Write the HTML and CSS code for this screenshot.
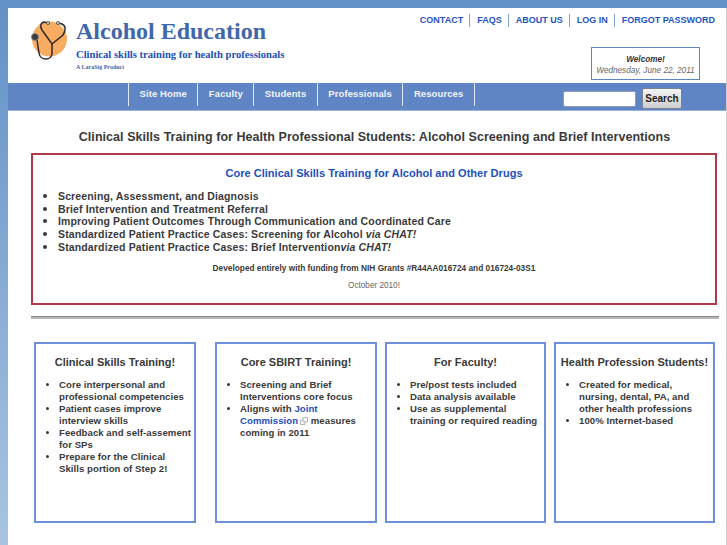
FILE: index.html
```html
<!DOCTYPE html>
<html>
<head>
  <title>Alcohol Education</title>
  <link rel="stylesheet" href="styles.css">
</head>
<body>
  <div class="page">
    <div class="header">
      <div class="brand">
        <svg class="logo" width="38" height="42" viewBox="0 0 38 42">
          <circle cx="18.500" cy="21" r="17.500" fill="#f8ac62"/>
          <path d="M17 5 L13 4 C9 5 9 9 11 12 L21 26 L32 17 C35 12 35 8 31 6 L27 5" fill="none" stroke="#2f2a28" stroke-width="1.500"/>
          <path d="M21 26 L21 35 C21 43 9 43 8 35 L6 22" fill="none" stroke="#2f2a28" stroke-width="1.500"/>
          <circle cx="4" cy="19" r="3.500" fill="#3a3a3a" stroke="#888"/>
          <circle cx="17" cy="5" r="1.500" fill="#ddd" stroke="#555"/>
          <circle cx="27" cy="5" r="1.500" fill="#ddd" stroke="#555"/>
        </svg>
        <div class="brand-text">
          <div class="site-name">Alcohol Education</div>
          <div class="tagline">Clinical skills training for health professionals</div>
          <div class="product">A LaraSig Product</div>
        </div>
      </div>
      <div class="header-right">
        <ul class="top-links">
          <li>CONTACT</li>
          <li>FAQS</li>
          <li>ABOUT US</li>
          <li>LOG IN</li>
          <li>FORGOT PASSWORD</li>
        </ul>
        <div class="welcome">
          <b>Welcome!</b>
          <span>Wednesday, June 22, 2011</span>
        </div>
      </div>
    </div>

    <div class="nav">
      <ul class="menu">
        <li>Site Home</li>
        <li>Faculty</li>
        <li>Students</li>
        <li>Professionals</li>
        <li>Resources</li>
      </ul>
      <div class="search">
        <input type="text">
        <button>Search</button>
      </div>
    </div>

    <h1>Clinical Skills Training for Health Professional Students: Alcohol Screening and Brief Interventions</h1>

    <div class="core">
      <h2>Core Clinical Skills Training for Alcohol and Other Drugs</h2>
      <ul>
        <li>Screening, Assessment, and Diagnosis</li>
        <li>Brief Intervention and Treatment Referral</li>
        <li>Improving Patient Outcomes Through Communication and Coordinated Care</li>
        <li>Standardized Patient Practice Cases: Screening for Alcohol <i>via CHAT!</i></li>
        <li>Standardized Patient Practice Cases: Brief Intervention<i>via CHAT!</i></li>
      </ul>
      <p class="funding">Developed entirely with funding from NIH Grants #R44AA016724 and 016724-03S1</p>
      <p class="date">October 2010!</p>
    </div>

    <div class="rule"></div>

    <div class="cards">
      <div class="card">
        <h3>Clinical Skills Training!</h3>
        <ul>
          <li>Core interpersonal and professional competencies</li>
          <li>Patient cases improve interview skills</li>
          <li>Feedback and self-assement for SPs</li>
          <li>Prepare for the Clinical Skills portion of Step 2!</li>
        </ul>
      </div>
      <div class="card">
        <h3>Core SBIRT Training!</h3>
        <ul>
          <li>Screening and Brief Interventions core focus</li>
          <li>Aligns with <a href="#">Joint Commission</a><svg class="ext" width="8" height="8" viewBox="0 0 9 9"><path d="M3.500 .5h5v5h-5zM.5 3.500h3M.5 3.500v5h5v-3" fill="none" stroke="#aaa"/></svg> measures coming in 2011</li>
        </ul>
      </div>
      <div class="card">
        <h3>For Faculty!</h3>
        <ul>
          <li>Pre/post tests included</li>
          <li>Data analysis available</li>
          <li>Use as supplemental training or required reading</li>
        </ul>
      </div>
      <div class="card">
        <h3>Health Profession Students!</h3>
        <ul>
          <li>Created for medical, nursing, dental, PA, and other health professions</li>
          <li>100% Internet-based</li>
        </ul>
      </div>
    </div>
  </div>
</body>
</html>
```

FILE: styles.css
```css
html {
  height: 100%;
}
body {
  margin: 0;
  padding: 8px 0 0 8px;
  height: 545px;
  box-sizing: border-box;
  overflow: hidden;
  background: linear-gradient(to bottom, #6291c7, #a9c4e2);
  font-family: "Liberation Sans", Arial, sans-serif;
  color: #3a3a3a;
}
.page {
  background: #fff;
  height: 537px;
  border-right: 1px solid #ccc;
}
.header {
  display: flex;
  justify-content: space-between;
  height: 75px;
}
.brand {
  display: flex;
  padding: 10px 0 0 23px;
}
.logo {
  margin-right: 7px;
}
.site-name {
  font-family: "Liberation Serif", serif;
  font-size: 24px;
  font-weight: bold;
  color: #3f67ab;
  line-height: 28px;
  margin-top: -1px;
}
.tagline {
  font-family: "Liberation Serif", serif;
  font-size: 10.600px;
  font-weight: bold;
  color: #1e4fb4;
  margin-top: 4px;
}
.product {
  font-family: "Liberation Serif", serif;
  font-size: 6px;
  font-weight: bold;
  color: #3f67ab;
  margin-top: 4px;
}
.header-right {
  display: flex;
  flex-direction: column;
  align-items: flex-end;
}
.top-links {
  list-style: none;
  margin: 6px 5px 0 0;
  padding: 0;
  display: flex;
}
.top-links li {
  font-size: 9px;
  font-weight: bold;
  color: #1e55c0;
  line-height: 13px;
  padding: 0 6px 0 7px;
  border-left: 1px solid #7fa2d0;
}
.top-links li:first-child {
  border-left: none;
}
.welcome {
  margin: 20px 26px 0 0;
  width: 109px;
  height: 33px;
  box-sizing: border-box;
  border: 1px solid #6085c5;
  text-align: center;
  font-size: 8.200px;
  font-style: italic;
  line-height: 11px;
  padding-top: 6px;
  white-space: nowrap;
  color: #666;
}
.welcome b {
  display: block;
  color: #333;
}
.nav {
  height: 27px;
  background: #6085c5;
  display: flex;
  justify-content: space-between;
  border-bottom: 1px solid #9ab3dc;
}
.menu {
  list-style: none;
  margin: 0 0 0 120px;
  padding: 0;
  display: flex;
  height: 23px;
  border-right: 1px solid #dfe7f4;
}
.menu li {
  border-left: 1px solid #dfe7f4;
  padding: 0 10.500px;
  font-size: 9.500px;
  font-weight: bold;
  letter-spacing: .1px;
  line-height: 22px;
  color: #f2f5fb;
}
.search {
  display: flex;
  gap: 6px;
  padding: 5px 44px 0 0;
}
.search input {
  width: 73px;
  height: 16px;
  box-sizing: border-box;
  margin: 3px 0 0;
  padding: 0;
  border: 1px solid #8a9cbc;
  border-radius: 2px;
  background: #fff;
}
.search button {
  width: 40px;
  height: 21px;
  padding: 0;
  border: 1px solid #7b8496;
  border-radius: 2px;
  background: linear-gradient(to bottom, #f4f4f4, #cfcfcf);
  font-family: "Liberation Sans", Arial, sans-serif;
  font-size: 10px;
  font-weight: bold;
  color: #222;
}
h1 {
  margin: 18px 0 0;
  text-align: center;
  font-size: 12.500px;
  line-height: 16px;
  font-weight: bold;
  letter-spacing: .05px;
  padding-left: 15px;
}
.core {
  margin: 8px 0 0 23px;
  width: 686px;
  height: 152px;
  box-sizing: border-box;
  border: 2px solid #b03a48;
  padding-top: 11px;
}
.core h2 {
  margin: 0;
  text-align: center;
  font-size: 11px;
  line-height: 14px;
  font-weight: bold;
  letter-spacing: .03px;
  color: #1e4fc0;
}
.core ul {
  margin: 10px 0 0;
  padding: 0 0 0 25px;
}
.core li {
  font-size: 10.500px;
  line-height: 12.700px;
  font-weight: bold;
  letter-spacing: .14px;
}
.core li::marker {
  font-size: 13px;
}
.funding {
  margin: 9px 0 0;
  text-align: center;
  font-size: 8.300px;
  line-height: 11px;
  font-weight: bold;
}
.date {
  margin: 6px 0 0;
  text-align: center;
  font-size: 8.200px;
  line-height: 11px;
  color: #666;
}
.rule {
  margin: 11px 0 0 23px;
  width: 688px;
  height: 3px;
  box-sizing: border-box;
  background: #b8b8b8;
  border-top: 1px solid #888;
}
.cards {
  display: flex;
  gap: 8px;
  margin: 23px 0 0 26px;
}
.card {
  width: 162px;
  height: 181px;
  box-sizing: border-box;
  border: 2px solid #6e8fdc;
  padding-top: 11px;
}
.card:first-child {
  margin-right: 11px;
}
.card:nth-child(n+3) {
  width: 161px;
}
.card h3 {
  margin: 0;
  text-align: center;
  font-size: 11px;
  line-height: 14px;
  font-weight: bold;
  white-space: nowrap;
}
.card ul {
  margin: 10px 0 0;
  padding: 0 3px 0 23px;
}
.card li {
  font-size: 9.600px;
  line-height: 12px;
  font-weight: bold;
  letter-spacing: .05px;
}
.card a {
  color: #1e4fc0;
  text-decoration: none;
}
.ext {
  margin-left: 2px;
  vertical-align: -1px;
}
```
